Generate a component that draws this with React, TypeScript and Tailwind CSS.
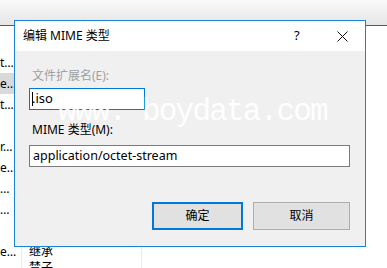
import React from 'react';

const ui = '"Noto Sans", "Noto Sans CJK SC", sans-serif';

const leftRows = ['t…', 'e…', 't…', '', 'r…', 'e…', '…', '…', '', 'e…'];

export default function App() {
  return (
    <div
      className="relative w-[387px] h-[268px] overflow-hidden bg-white text-[#000]"
      style={{ fontFamily: ui }}
    >
      {/* window behind */}
      <div className="h-[26px] bg-gradient-to-b from-[#f9f9f9] to-[#e6e6e6] border-b border-[#50557a]" />
      <div className="flex">
        <div className="w-[21px] pt-[26px] flex flex-col">
          {leftRows.map((t, i) => (
            <div
              key={i}
              className={`h-[21px] text-[12px] leading-[21px] whitespace-nowrap overflow-hidden ${i === 1 ? 'bg-[#d9d9d9]' : ''}`}
            >
              {t}
            </div>
          ))}
        </div>
        <div className="w-[121px] border-l border-r border-[#eaeaea] pt-[218px] pl-[7px] text-[12px] leading-[16px]">
          <div>继承</div>
          <div>禁子</div>
        </div>
      </div>

      {/* dialog */}
      <div className="absolute left-[14px] top-[20px] w-[352px] h-[227px] border border-[#1883d7] bg-[#f0f0f0] flex flex-col">
        <div className="h-[30px] bg-white flex items-center pl-[8px] pr-[16px] text-[12px]">
          <span className="flex-1">编辑 MIME 类型</span>
          <span className="w-[10px] text-[13px] mr-[33px]">?</span>
          <svg width="11" height="11" viewBox="0 0 11 11" className="mr-[1px]">
            <path d="M0.5 0.5 L10.5 10.5 M10.5 0.5 L0.5 10.5" stroke="#111" strokeWidth="1" />
          </svg>
        </div>
        <div className="flex-1 flex flex-col pl-[14px] pt-[17px] text-[12px]">
          <div className="ml-[3px] h-[16px] leading-[16px] text-[#a0a0a0]">文件扩展名(E):</div>
          <div className="mt-[4px] w-[116px] h-[22px] border border-[#0078d7] bg-white flex items-center pl-[2px] text-[13px]">
            <span className="w-px h-[14px] bg-black" />
            <span className="-ml-px">.iso</span>
          </div>
          <div className="ml-[3px] mt-[12px] h-[16px] leading-[16px]">MIME 类型(M):</div>
          <div className="mt-[7px] w-[321px] h-[22px] border border-[#7a7a7a] bg-white flex items-center pl-[3px] text-[12.5px]">
            application/octet-stream
          </div>
          <div className="mt-[35px] flex pl-[123px] gap-[10px]">
            <div className="w-[91px] h-[28px] border-2 border-[#0078d7] bg-[#e1e1e1] flex items-center justify-center">确定</div>
            <div className="w-[97px] h-[28px] border border-[#adadad] bg-[#e1e1e1] flex items-center justify-center">取消</div>
          </div>
        </div>
      </div>

      {/* watermark */}
      <div
        className="absolute left-[58px] top-[96px] text-[31px] leading-[31px] tracking-[-1.8px] text-white/90 whitespace-pre pointer-events-none"
        style={{ fontFamily: '"Liberation Mono", monospace' }}
      >
        www. boydata.com
      </div>
    </div>
  );
}
